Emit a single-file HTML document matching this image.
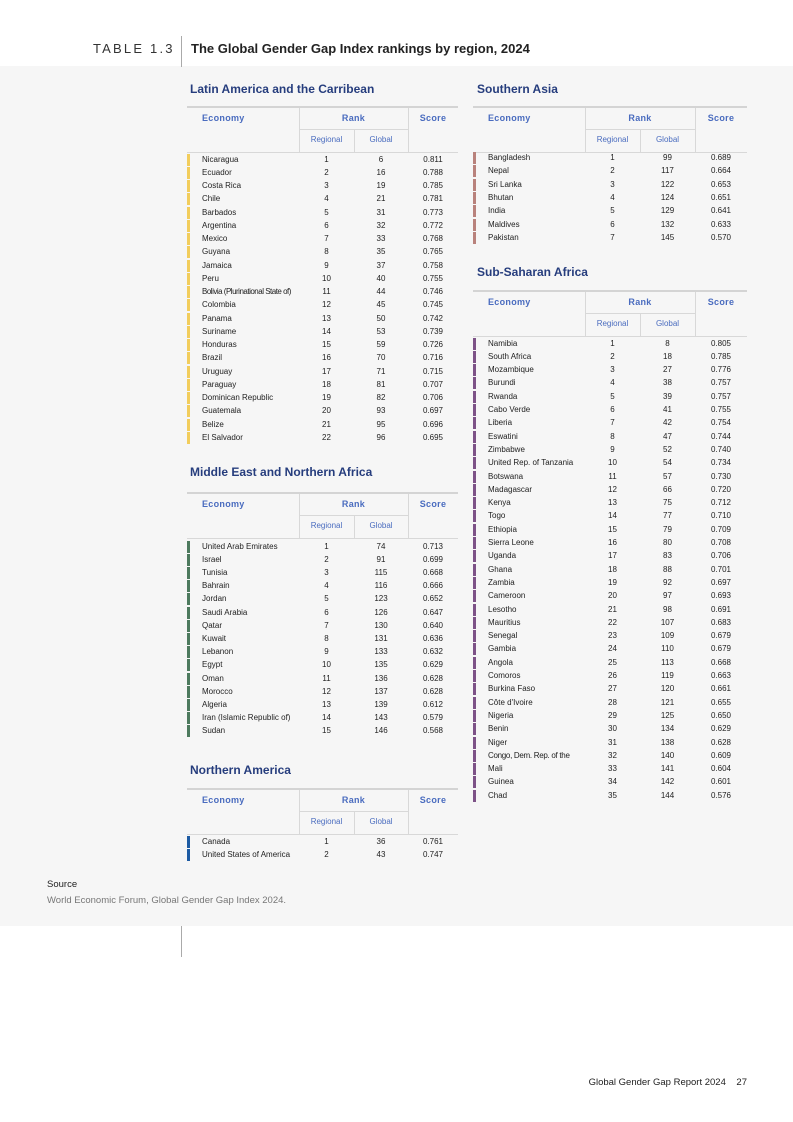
<!DOCTYPE html>
<html><head><meta charset="utf-8"><style>
*{margin:0;padding:0;box-sizing:border-box}
body{width:793px;height:1122px;position:relative;background:#fff;font-family:"Liberation Sans",Arial,sans-serif;color:#222;overflow:hidden}
.gray{position:absolute;left:0;top:66px;width:793px;height:860px;background:#f6f6f6}
.abs{position:absolute}
.title{position:absolute;font-size:12px;font-weight:bold;color:#263d7d;white-space:nowrap}
.tbl{position:absolute}
.tbl .top{position:absolute;left:0;right:0;top:0;height:2px;background:#d4d4d4}
.h{position:absolute;font-size:9px;font-weight:bold;color:#4a6cbf;letter-spacing:.3px;line-height:12px}
.s{position:absolute;font-size:8px;color:#4a6cbf;line-height:12px;text-align:center}
.vl{position:absolute;width:1px;background:#d8d8d8}
.hl{position:absolute;height:1px;background:#d8d8d8}
.r{position:absolute;left:0;right:0;font-size:8px;line-height:13px;height:13px;white-space:nowrap}
.r b{position:absolute;left:0;top:1px;width:3px;height:12px}
.r span{position:absolute;text-align:center}
</style></head><body>
<div class="gray"></div>
<div class="abs" style="left:93px;top:41px;font-size:13px;letter-spacing:2.2px;color:#333">TABLE 1.3</div>
<div class="abs" style="left:181px;top:36px;width:1px;height:31px;background:#aaa"></div>
<div class="abs" style="left:191px;top:41px;font-size:13px;font-weight:bold;color:#222">The Global Gender Gap Index rankings by region, 2024</div>

<!-- LEFT: Latin -->
<div class="title" style="left:190px;top:82px">Latin America and the Carribean</div>
<div class="tbl" style="left:187px;top:106px;width:271px;height:340px">
<div class="top"></div>
<div class="h" style="left:15px;top:6px">Economy</div>
<div class="h" style="left:112px;width:109px;text-align:center;top:6px">Rank</div>
<div class="h" style="left:221px;width:50px;text-align:center;top:6px">Score</div>
<div class="vl" style="left:112px;top:2px;height:44px"></div>
<div class="vl" style="left:221px;top:2px;height:44px"></div>
<div class="hl" style="left:112px;width:109px;top:23px"></div>
<div class="vl" style="left:167px;top:23px;height:23px"></div>
<div class="s" style="left:112px;width:55px;top:28px">Regional</div>
<div class="s" style="left:167px;width:54px;top:28px">Global</div>
<div class="hl" style="left:0;width:271px;top:46px"></div>
<div style="position:absolute;left:0;right:0;top:46.5px">
<style>.L b{background:#f2cd5c}.L .c1{left:15px}.L .c2{left:112px;width:55px}.L .c3{left:167px;width:54px}.L .c4{left:221px;width:50px}</style>
<div class="L">
<div class="r" style="top:0px"><b></b><span class="c1">Nicaragua</span><span class="c2">1</span><span class="c3">6</span><span class="c4">0.811</span></div>
<div class="r" style="top:13.25px"><b></b><span class="c1">Ecuador</span><span class="c2">2</span><span class="c3">16</span><span class="c4">0.788</span></div>
<div class="r" style="top:26.5px"><b></b><span class="c1">Costa Rica</span><span class="c2">3</span><span class="c3">19</span><span class="c4">0.785</span></div>
<div class="r" style="top:39.75px"><b></b><span class="c1">Chile</span><span class="c2">4</span><span class="c3">21</span><span class="c4">0.781</span></div>
<div class="r" style="top:53px"><b></b><span class="c1">Barbados</span><span class="c2">5</span><span class="c3">31</span><span class="c4">0.773</span></div>
<div class="r" style="top:66.25px"><b></b><span class="c1">Argentina</span><span class="c2">6</span><span class="c3">32</span><span class="c4">0.772</span></div>
<div class="r" style="top:79.5px"><b></b><span class="c1">Mexico</span><span class="c2">7</span><span class="c3">33</span><span class="c4">0.768</span></div>
<div class="r" style="top:92.75px"><b></b><span class="c1">Guyana</span><span class="c2">8</span><span class="c3">35</span><span class="c4">0.765</span></div>
<div class="r" style="top:106px"><b></b><span class="c1">Jamaica</span><span class="c2">9</span><span class="c3">37</span><span class="c4">0.758</span></div>
<div class="r" style="top:119.25px"><b></b><span class="c1">Peru</span><span class="c2">10</span><span class="c3">40</span><span class="c4">0.755</span></div>
<div class="r" style="top:132.5px"><b></b><span class="c1" style="letter-spacing:-.5px">Bolivia (Plurinational State of)</span><span class="c2">11</span><span class="c3">44</span><span class="c4">0.746</span></div>
<div class="r" style="top:145.75px"><b></b><span class="c1">Colombia</span><span class="c2">12</span><span class="c3">45</span><span class="c4">0.745</span></div>
<div class="r" style="top:159px"><b></b><span class="c1">Panama</span><span class="c2">13</span><span class="c3">50</span><span class="c4">0.742</span></div>
<div class="r" style="top:172.25px"><b></b><span class="c1">Suriname</span><span class="c2">14</span><span class="c3">53</span><span class="c4">0.739</span></div>
<div class="r" style="top:185.5px"><b></b><span class="c1">Honduras</span><span class="c2">15</span><span class="c3">59</span><span class="c4">0.726</span></div>
<div class="r" style="top:198.75px"><b></b><span class="c1">Brazil</span><span class="c2">16</span><span class="c3">70</span><span class="c4">0.716</span></div>
<div class="r" style="top:212px"><b></b><span class="c1">Uruguay</span><span class="c2">17</span><span class="c3">71</span><span class="c4">0.715</span></div>
<div class="r" style="top:225.25px"><b></b><span class="c1">Paraguay</span><span class="c2">18</span><span class="c3">81</span><span class="c4">0.707</span></div>
<div class="r" style="top:238.5px"><b></b><span class="c1">Dominican Republic</span><span class="c2">19</span><span class="c3">82</span><span class="c4">0.706</span></div>
<div class="r" style="top:251.75px"><b></b><span class="c1">Guatemala</span><span class="c2">20</span><span class="c3">93</span><span class="c4">0.697</span></div>
<div class="r" style="top:265px"><b></b><span class="c1">Belize</span><span class="c2">21</span><span class="c3">95</span><span class="c4">0.696</span></div>
<div class="r" style="top:278.25px"><b></b><span class="c1">El Salvador</span><span class="c2">22</span><span class="c3">96</span><span class="c4">0.695</span></div>
</div></div></div>

<!-- MENA -->
<div class="title" style="left:190px;top:465px">Middle East and Northern Africa</div>
<div class="tbl" style="left:187px;top:492px;width:271px;height:250px">
<div class="top"></div>
<div class="h" style="left:15px;top:6px">Economy</div>
<div class="h" style="left:112px;width:109px;text-align:center;top:6px">Rank</div>
<div class="h" style="left:221px;width:50px;text-align:center;top:6px">Score</div>
<div class="vl" style="left:112px;top:2px;height:44px"></div>
<div class="vl" style="left:221px;top:2px;height:44px"></div>
<div class="hl" style="left:112px;width:109px;top:23px"></div>
<div class="vl" style="left:167px;top:23px;height:23px"></div>
<div class="s" style="left:112px;width:55px;top:28px">Regional</div>
<div class="s" style="left:167px;width:54px;top:28px">Global</div>
<div class="hl" style="left:0;width:271px;top:46px"></div>
<div class="L M" style="position:absolute;left:0;right:0;top:47.5px">
<style>.M b{background:#4d7a5e}</style>
<div class="r" style="top:0px"><b></b><span class="c1">United Arab Emirates</span><span class="c2">1</span><span class="c3">74</span><span class="c4">0.713</span></div>
<div class="r" style="top:13.2px"><b></b><span class="c1">Israel</span><span class="c2">2</span><span class="c3">91</span><span class="c4">0.699</span></div>
<div class="r" style="top:26.4px"><b></b><span class="c1">Tunisia</span><span class="c2">3</span><span class="c3">115</span><span class="c4">0.668</span></div>
<div class="r" style="top:39.6px"><b></b><span class="c1">Bahrain</span><span class="c2">4</span><span class="c3">116</span><span class="c4">0.666</span></div>
<div class="r" style="top:52.8px"><b></b><span class="c1">Jordan</span><span class="c2">5</span><span class="c3">123</span><span class="c4">0.652</span></div>
<div class="r" style="top:66px"><b></b><span class="c1">Saudi Arabia</span><span class="c2">6</span><span class="c3">126</span><span class="c4">0.647</span></div>
<div class="r" style="top:79.2px"><b></b><span class="c1">Qatar</span><span class="c2">7</span><span class="c3">130</span><span class="c4">0.640</span></div>
<div class="r" style="top:92.4px"><b></b><span class="c1">Kuwait</span><span class="c2">8</span><span class="c3">131</span><span class="c4">0.636</span></div>
<div class="r" style="top:105.6px"><b></b><span class="c1">Lebanon</span><span class="c2">9</span><span class="c3">133</span><span class="c4">0.632</span></div>
<div class="r" style="top:118.8px"><b></b><span class="c1">Egypt</span><span class="c2">10</span><span class="c3">135</span><span class="c4">0.629</span></div>
<div class="r" style="top:132px"><b></b><span class="c1">Oman</span><span class="c2">11</span><span class="c3">136</span><span class="c4">0.628</span></div>
<div class="r" style="top:145.2px"><b></b><span class="c1">Morocco</span><span class="c2">12</span><span class="c3">137</span><span class="c4">0.628</span></div>
<div class="r" style="top:158.4px"><b></b><span class="c1">Algeria</span><span class="c2">13</span><span class="c3">139</span><span class="c4">0.612</span></div>
<div class="r" style="top:171.6px"><b></b><span class="c1">Iran (Islamic Republic of)</span><span class="c2">14</span><span class="c3">143</span><span class="c4">0.579</span></div>
<div class="r" style="top:184.8px"><b></b><span class="c1">Sudan</span><span class="c2">15</span><span class="c3">146</span><span class="c4">0.568</span></div>
</div></div>

<!-- NA -->
<div class="title" style="left:190px;top:763px">Northern America</div>
<div class="tbl" style="left:187px;top:788px;width:271px;height:80px">
<div class="top"></div>
<div class="h" style="left:15px;top:6px">Economy</div>
<div class="h" style="left:112px;width:109px;text-align:center;top:6px">Rank</div>
<div class="h" style="left:221px;width:50px;text-align:center;top:6px">Score</div>
<div class="vl" style="left:112px;top:2px;height:44px"></div>
<div class="vl" style="left:221px;top:2px;height:44px"></div>
<div class="hl" style="left:112px;width:109px;top:23px"></div>
<div class="vl" style="left:167px;top:23px;height:23px"></div>
<div class="s" style="left:112px;width:55px;top:28px">Regional</div>
<div class="s" style="left:167px;width:54px;top:28px">Global</div>
<div class="hl" style="left:0;width:271px;top:46px"></div>
<div class="L N" style="position:absolute;left:0;right:0;top:47px">
<style>.N b{background:#1d5ba3}</style>
<div class="r" style="top:0px"><b></b><span class="c1">Canada</span><span class="c2">1</span><span class="c3">36</span><span class="c4">0.761</span></div>
<div class="r" style="top:13.3px"><b></b><span class="c1">United States of America</span><span class="c2">2</span><span class="c3">43</span><span class="c4">0.747</span></div>
</div></div>

<!-- Southern Asia -->
<div class="title" style="left:477px;top:82px">Southern Asia</div>
<div class="tbl" style="left:473px;top:106px;width:274px;height:140px">
<div class="top"></div>
<div class="h" style="left:15px;top:6px">Economy</div>
<div class="h" style="left:112px;width:110px;text-align:center;top:6px">Rank</div>
<div class="h" style="left:222px;width:52px;text-align:center;top:6px">Score</div>
<div class="vl" style="left:112px;top:2px;height:44px"></div>
<div class="vl" style="left:222px;top:2px;height:44px"></div>
<div class="hl" style="left:112px;width:110px;top:23px"></div>
<div class="vl" style="left:167px;top:23px;height:23px"></div>
<div class="s" style="left:112px;width:55px;top:28px">Regional</div>
<div class="s" style="left:167px;width:55px;top:28px">Global</div>
<div class="hl" style="left:0;width:274px;top:46px"></div>
<div class="R S" style="position:absolute;left:0;right:0;top:45px">
<style>.R .c1{left:15px}.R .c2{left:112px;width:55px}.R .c3{left:167px;width:55px}.R .c4{left:222px;width:52px}.S b{background:#b9827c}</style>
<div class="r" style="top:0px"><b></b><span class="c1">Bangladesh</span><span class="c2">1</span><span class="c3">99</span><span class="c4">0.689</span></div>
<div class="r" style="top:13.33px"><b></b><span class="c1">Nepal</span><span class="c2">2</span><span class="c3">117</span><span class="c4">0.664</span></div>
<div class="r" style="top:26.66px"><b></b><span class="c1">Sri Lanka</span><span class="c2">3</span><span class="c3">122</span><span class="c4">0.653</span></div>
<div class="r" style="top:40px"><b></b><span class="c1">Bhutan</span><span class="c2">4</span><span class="c3">124</span><span class="c4">0.651</span></div>
<div class="r" style="top:53.33px"><b></b><span class="c1">India</span><span class="c2">5</span><span class="c3">129</span><span class="c4">0.641</span></div>
<div class="r" style="top:66.66px"><b></b><span class="c1">Maldives</span><span class="c2">6</span><span class="c3">132</span><span class="c4">0.633</span></div>
<div class="r" style="top:80px"><b></b><span class="c1">Pakistan</span><span class="c2">7</span><span class="c3">145</span><span class="c4">0.570</span></div>
</div></div>

<!-- SSA -->
<div class="title" style="left:477px;top:265px">Sub-Saharan Africa</div>
<div class="tbl" style="left:473px;top:290px;width:274px;height:520px">
<div class="top"></div>
<div class="h" style="left:15px;top:6px">Economy</div>
<div class="h" style="left:112px;width:110px;text-align:center;top:6px">Rank</div>
<div class="h" style="left:222px;width:52px;text-align:center;top:6px">Score</div>
<div class="vl" style="left:112px;top:2px;height:44px"></div>
<div class="vl" style="left:222px;top:2px;height:44px"></div>
<div class="hl" style="left:112px;width:110px;top:23px"></div>
<div class="vl" style="left:167px;top:23px;height:23px"></div>
<div class="s" style="left:112px;width:55px;top:28px">Regional</div>
<div class="s" style="left:167px;width:55px;top:28px">Global</div>
<div class="hl" style="left:0;width:274px;top:46px"></div>
<div class="R F" style="position:absolute;left:0;right:0;top:46.5px">
<style>.F b{background:#7d5287}</style>
<div class="r" style="top:0px"><b></b><span class="c1">Namibia</span><span class="c2">1</span><span class="c3">8</span><span class="c4">0.805</span></div>
<div class="r" style="top:13.3px"><b></b><span class="c1">South Africa</span><span class="c2">2</span><span class="c3">18</span><span class="c4">0.785</span></div>
<div class="r" style="top:26.6px"><b></b><span class="c1">Mozambique</span><span class="c2">3</span><span class="c3">27</span><span class="c4">0.776</span></div>
<div class="r" style="top:39.9px"><b></b><span class="c1">Burundi</span><span class="c2">4</span><span class="c3">38</span><span class="c4">0.757</span></div>
<div class="r" style="top:53.2px"><b></b><span class="c1">Rwanda</span><span class="c2">5</span><span class="c3">39</span><span class="c4">0.757</span></div>
<div class="r" style="top:66.5px"><b></b><span class="c1">Cabo Verde</span><span class="c2">6</span><span class="c3">41</span><span class="c4">0.755</span></div>
<div class="r" style="top:79.8px"><b></b><span class="c1">Liberia</span><span class="c2">7</span><span class="c3">42</span><span class="c4">0.754</span></div>
<div class="r" style="top:93.1px"><b></b><span class="c1">Eswatini</span><span class="c2">8</span><span class="c3">47</span><span class="c4">0.744</span></div>
<div class="r" style="top:106.4px"><b></b><span class="c1">Zimbabwe</span><span class="c2">9</span><span class="c3">52</span><span class="c4">0.740</span></div>
<div class="r" style="top:119.7px"><b></b><span class="c1">United Rep. of Tanzania</span><span class="c2">10</span><span class="c3">54</span><span class="c4">0.734</span></div>
<div class="r" style="top:133px"><b></b><span class="c1">Botswana</span><span class="c2">11</span><span class="c3">57</span><span class="c4">0.730</span></div>
<div class="r" style="top:146.3px"><b></b><span class="c1">Madagascar</span><span class="c2">12</span><span class="c3">66</span><span class="c4">0.720</span></div>
<div class="r" style="top:159.6px"><b></b><span class="c1">Kenya</span><span class="c2">13</span><span class="c3">75</span><span class="c4">0.712</span></div>
<div class="r" style="top:172.9px"><b></b><span class="c1">Togo</span><span class="c2">14</span><span class="c3">77</span><span class="c4">0.710</span></div>
<div class="r" style="top:186.2px"><b></b><span class="c1">Ethiopia</span><span class="c2">15</span><span class="c3">79</span><span class="c4">0.709</span></div>
<div class="r" style="top:199.5px"><b></b><span class="c1">Sierra Leone</span><span class="c2">16</span><span class="c3">80</span><span class="c4">0.708</span></div>
<div class="r" style="top:212.8px"><b></b><span class="c1">Uganda</span><span class="c2">17</span><span class="c3">83</span><span class="c4">0.706</span></div>
<div class="r" style="top:226.1px"><b></b><span class="c1">Ghana</span><span class="c2">18</span><span class="c3">88</span><span class="c4">0.701</span></div>
<div class="r" style="top:239.4px"><b></b><span class="c1">Zambia</span><span class="c2">19</span><span class="c3">92</span><span class="c4">0.697</span></div>
<div class="r" style="top:252.7px"><b></b><span class="c1">Cameroon</span><span class="c2">20</span><span class="c3">97</span><span class="c4">0.693</span></div>
<div class="r" style="top:266px"><b></b><span class="c1">Lesotho</span><span class="c2">21</span><span class="c3">98</span><span class="c4">0.691</span></div>
<div class="r" style="top:279.3px"><b></b><span class="c1">Mauritius</span><span class="c2">22</span><span class="c3">107</span><span class="c4">0.683</span></div>
<div class="r" style="top:292.6px"><b></b><span class="c1">Senegal</span><span class="c2">23</span><span class="c3">109</span><span class="c4">0.679</span></div>
<div class="r" style="top:305.9px"><b></b><span class="c1">Gambia</span><span class="c2">24</span><span class="c3">110</span><span class="c4">0.679</span></div>
<div class="r" style="top:319.2px"><b></b><span class="c1">Angola</span><span class="c2">25</span><span class="c3">113</span><span class="c4">0.668</span></div>
<div class="r" style="top:332.5px"><b></b><span class="c1">Comoros</span><span class="c2">26</span><span class="c3">119</span><span class="c4">0.663</span></div>
<div class="r" style="top:345.8px"><b></b><span class="c1">Burkina Faso</span><span class="c2">27</span><span class="c3">120</span><span class="c4">0.661</span></div>
<div class="r" style="top:359.1px"><b></b><span class="c1">Côte d'Ivoire</span><span class="c2">28</span><span class="c3">121</span><span class="c4">0.655</span></div>
<div class="r" style="top:372.4px"><b></b><span class="c1">Nigeria</span><span class="c2">29</span><span class="c3">125</span><span class="c4">0.650</span></div>
<div class="r" style="top:385.7px"><b></b><span class="c1">Benin</span><span class="c2">30</span><span class="c3">134</span><span class="c4">0.629</span></div>
<div class="r" style="top:399px"><b></b><span class="c1">Niger</span><span class="c2">31</span><span class="c3">138</span><span class="c4">0.628</span></div>
<div class="r" style="top:412.3px"><b></b><span class="c1" style="letter-spacing:-.3px">Congo, Dem. Rep. of the</span><span class="c2">32</span><span class="c3">140</span><span class="c4">0.609</span></div>
<div class="r" style="top:425.6px"><b></b><span class="c1">Mali</span><span class="c2">33</span><span class="c3">141</span><span class="c4">0.604</span></div>
<div class="r" style="top:438.9px"><b></b><span class="c1">Guinea</span><span class="c2">34</span><span class="c3">142</span><span class="c4">0.601</span></div>
<div class="r" style="top:452.2px"><b></b><span class="c1">Chad</span><span class="c2">35</span><span class="c3">144</span><span class="c4">0.576</span></div>
</div></div>

<div class="abs" style="left:47px;top:879px;font-size:9.5px;color:#222">Source</div>
<div class="abs" style="left:47px;top:895px;font-size:9.5px;color:#777">World Economic Forum, Global Gender Gap Index 2024.</div>
<div class="abs" style="left:181px;top:926px;width:1px;height:31px;background:#aaa"></div>
<div class="abs" style="right:46px;top:1077px;font-size:9.5px;color:#222;white-space:nowrap">Global Gender Gap Report 2024&nbsp;&nbsp;&nbsp;&nbsp;27</div>
</body></html>
